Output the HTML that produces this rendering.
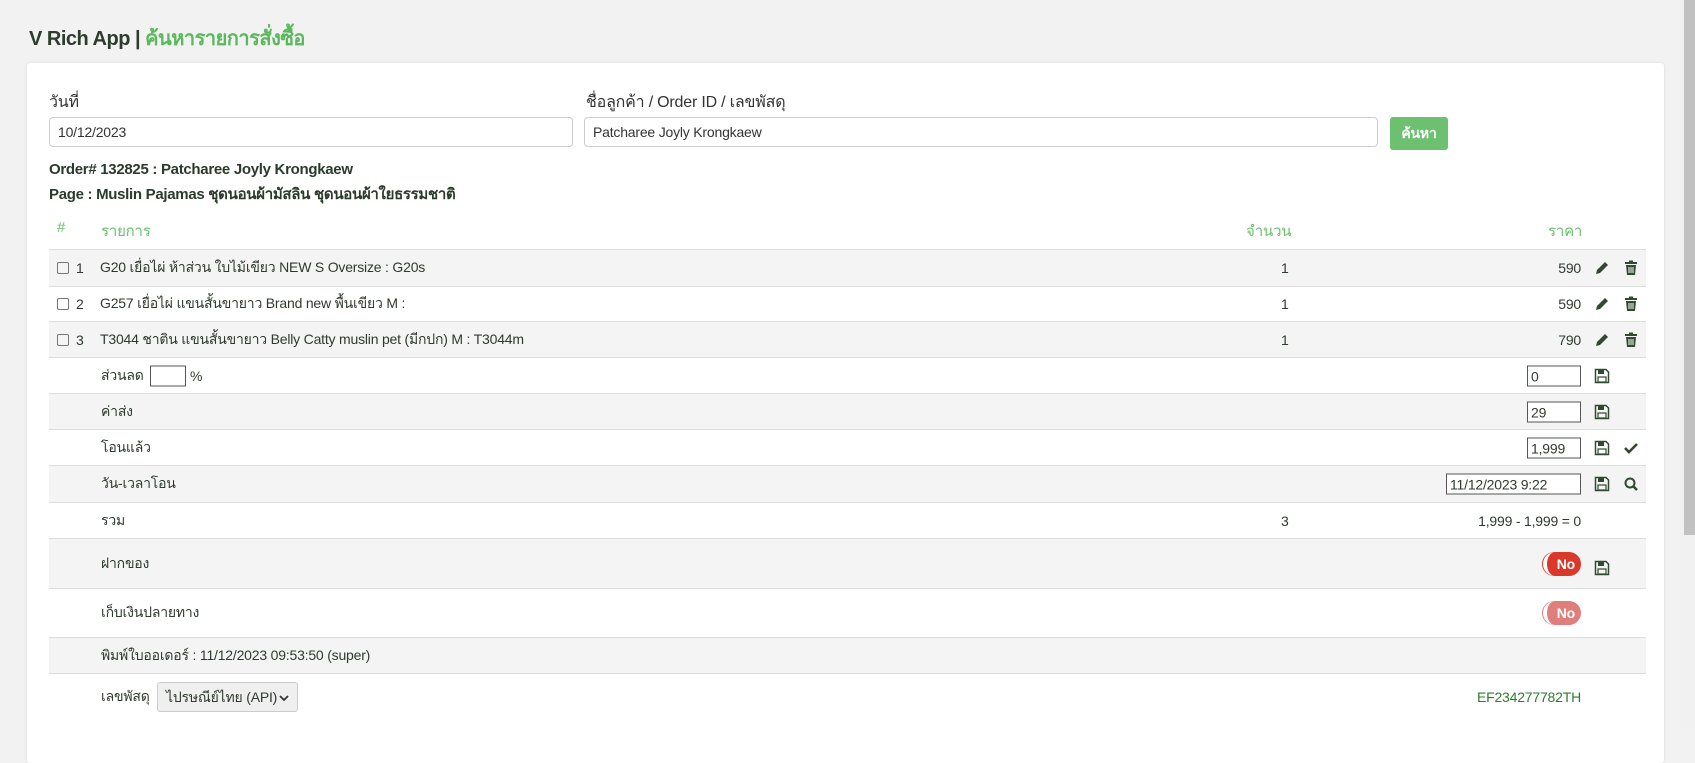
<!DOCTYPE html>
<html><head><meta charset="utf-8"><style>
*{box-sizing:border-box;margin:0;padding:0}
body{width:1695px;height:728px;overflow:hidden;background:#f2f2f2;font-family:"Liberation Sans",Tahoma,sans-serif;font-size:14px;letter-spacing:-0.2px;color:#2f3a2f;position:relative}
.sb{position:absolute;left:1684px;top:0;width:11px;height:535px;background:#c1c1c1}
.sbt{position:absolute;left:1680px;top:0;width:15px;height:728px;background:#f1f1f1}
h1{position:absolute;left:29px;top:22px;font-size:20px;font-weight:bold;letter-spacing:-0.5px;color:#2d3d2d}
h1 span{color:#5cb85c}
.card{position:absolute;left:27px;top:63px;width:1637px;height:700px;background:#fff;border-radius:3px;box-shadow:0 0 3px rgba(0,0,0,.1)}
.a{position:absolute}
.lbl{font-size:16px;color:#333}
.inp{position:absolute;height:30px;border:1px solid #ccc;border-radius:4px;padding:6px 8px;font-size:14px;color:#333}
.btn{position:absolute;left:1390px;top:117px;width:58px;height:33px;background:#6cc070;border-radius:3px;color:#fff;font-size:14px;text-align:center;line-height:33px;font-weight:bold}
.b{font-weight:bold;font-size:15px;color:#2b3b2b;letter-spacing:-0.3px}
.th{color:#6cbf6e;font-size:15px}
.row{position:absolute;left:49px;width:1597px;border-top:1px solid #ddd}
.g{background:#f4f4f4}
.row div{position:absolute;top:50%;transform:translateY(-50%);white-space:nowrap}
.cb{width:12px;height:12px;border:1px solid #777;border-radius:2px;left:8px}
.box{border:1px solid #555;height:21px;background:#fff;font-size:14px;padding:1px 3px;line-height:18px}
.tg{width:38px;height:24px;border-radius:12px;background:#d9382b;color:#fff;font-size:14px;font-weight:bold;line-height:24px;text-align:right;padding-right:6px;border-left:4px solid #fff;box-shadow:-1px 0 0 #d9382b}
svg{display:block}
</style></head><body>
<div class="sbt"></div><div class="sb"></div>
<h1>V Rich App | <span>ค้นหารายการสั่งซื้อ</span></h1>
<div class="card"></div>
<div class="a lbl" style="left:49px;top:90px">วันที่</div>
<div class="a lbl" style="left:586px;top:90px">ชื่อลูกค้า / Order ID / เลขพัสดุ</div>
<div class="inp" style="left:49px;top:117px;width:524px">10/12/2023</div>
<div class="inp" style="left:584px;top:117px;width:794px">Patcharee Joyly Krongkaew</div>
<div class="btn">ค้นหา</div>
<div class="a b" style="left:49px;top:161px">Order# 132825 : Patcharee Joyly Krongkaew</div>
<div class="a b" style="left:49px;top:182px">Page : Muslin Pajamas ชุดนอนผ้ามัสลิน ชุดนอนผ้าใยธรรมชาติ</div>
<div class="a th" style="left:57px;top:219px">#</div>
<div class="a th" style="left:101px;top:219px">รายการ</div>
<div class="a th" style="left:1246px;top:219px">จำนวน</div>
<div class="a th" style="left:1548px;top:219px">ราคา</div>

<svg width="0" height="0" style="position:absolute"><defs>
<g id="pen"><path d="M2 14 L3 10 L11 2 L14 5 L6 13 Z" fill="#2f4a2f"/></g>
<g id="trash"><rect x="2" y="2" width="12" height="2" fill="#2f4a2f"/><rect x="6" y="0.5" width="4" height="2" fill="#2f4a2f"/><path d="M3 5 H13 L12 15 H4 Z" fill="#2f4a2f"/><path d="M6 7 V13 M8 7 V13 M10 7 V13" stroke="#fff" stroke-width="1"/></g>
<g id="save"><path d="M1.5 1.5 H12 L14.5 4 V14.5 H1.5 Z" fill="none" stroke="#2f4a2f" stroke-width="1.5"/><rect x="4" y="2" width="6" height="4" fill="#2f4a2f"/><rect x="4" y="9" width="8" height="5" fill="none" stroke="#2f4a2f" stroke-width="1.2"/></g>
</defs></svg>

<div class="row g" style="top:249px;height:37px"><div class="cb"></div><div style="left:27px">1</div><div style="left:51px">G20 เยื่อไผ่ ห้าส่วน ใบไม้เขียว NEW S Oversize : G20s</div><div style="left:1232px">1</div><div style="right:65px">590</div><div style="left:1545px"><svg width="16" height="16"><use href="#pen"/></svg></div><div style="left:1574px"><svg width="16" height="16"><use href="#trash"/></svg></div></div>
<div class="row" style="top:286px;height:35px"><div class="cb"></div><div style="left:27px">2</div><div style="left:51px">G257 เยื่อไผ่ แขนสั้นขายาว Brand new พื้นเขียว M :</div><div style="left:1232px">1</div><div style="right:65px">590</div><div style="left:1545px"><svg width="16" height="16"><use href="#pen"/></svg></div><div style="left:1574px"><svg width="16" height="16"><use href="#trash"/></svg></div></div>
<div class="row g" style="top:321px;height:36px"><div class="cb"></div><div style="left:27px">3</div><div style="left:51px">T3044 ชาติน แขนสั้นขายาว Belly Catty muslin pet (มีกปก) M : T3044m</div><div style="left:1232px">1</div><div style="right:65px">790</div><div style="left:1545px"><svg width="16" height="16"><use href="#pen"/></svg></div><div style="left:1574px"><svg width="16" height="16"><use href="#trash"/></svg></div></div>
<div class="row" style="top:357px;height:36px"><div style="left:52px">ส่วนลด</div><div class="box" style="left:101px;width:36px"></div><div style="left:141px">%</div><div class="box" style="left:1478px;width:54px">0</div><div style="left:1545px"><svg width="16" height="16"><use href="#save"/></svg></div></div>
<div class="row g" style="top:393px;height:36px"><div style="left:52px">ค่าส่ง</div><div class="box" style="left:1478px;width:54px">29</div><div style="left:1545px"><svg width="16" height="16"><use href="#save"/></svg></div></div>
<div class="row" style="top:429px;height:36px"><div style="left:52px">โอนแล้ว</div><div class="box" style="left:1478px;width:54px">1,999</div><div style="left:1545px"><svg width="16" height="16"><use href="#save"/></svg></div><div style="left:1574px"><svg width="16" height="16"><path d="M2 8 L6 12 L14 4" fill="none" stroke="#2f4a2f" stroke-width="2.6"/></svg></div></div>
<div class="row g" style="top:465px;height:37px"><div style="left:52px">วัน-เวลาโอน</div><div class="box" style="left:1397px;width:135px">11/12/2023 9:22</div><div style="left:1545px"><svg width="16" height="16"><use href="#save"/></svg></div><div style="left:1574px"><svg width="16" height="16"><circle cx="7" cy="7" r="4.5" fill="none" stroke="#2f4a2f" stroke-width="2"/><path d="M10 10 L14 14" stroke="#2f4a2f" stroke-width="2.5"/></svg></div></div>
<div class="row" style="top:502px;height:36px"><div style="left:52px">รวม</div><div style="left:1232px">3</div><div style="right:65px">1,999 - 1,999 = 0</div></div>
<div class="row g" style="top:538px;height:50px"><div style="left:52px">ฝากของ</div><div class="tg" style="left:1494px">No</div><div style="left:1545px;top:60%"><svg width="16" height="16"><use href="#save"/></svg></div></div>
<div class="row" style="top:588px;height:49px"><div style="left:52px">เก็บเงินปลายทาง</div><div class="tg" style="left:1494px;background:#e07e7c;box-shadow:-1px 0 0 #e07e7c">No</div></div>
<div class="row g" style="top:637px;height:36px"><div style="left:52px">พิมพ์ใบออเดอร์ : 11/12/2023 09:53:50 (super)</div></div>
<div class="row" style="top:673px;height:55px;border-bottom:none"><div style="left:52px;top:23px">เลขพัสดุ</div><div style="left:108px;top:23px;width:141px;height:30px;border:1px solid #ccc;border-radius:3px;background:#efefef;padding:6px 8px;font-size:14px;line-height:16px">ไปรษณีย์ไทย (API)<svg width="10" height="8" style="position:absolute;right:8px;top:11px"><path d="M1 2 L5 6 L9 2" fill="none" stroke="#333" stroke-width="1.8"/></svg></div><div style="right:65px;top:23px;color:#2e7d2e">EF234277782TH</div></div>
</body></html>
